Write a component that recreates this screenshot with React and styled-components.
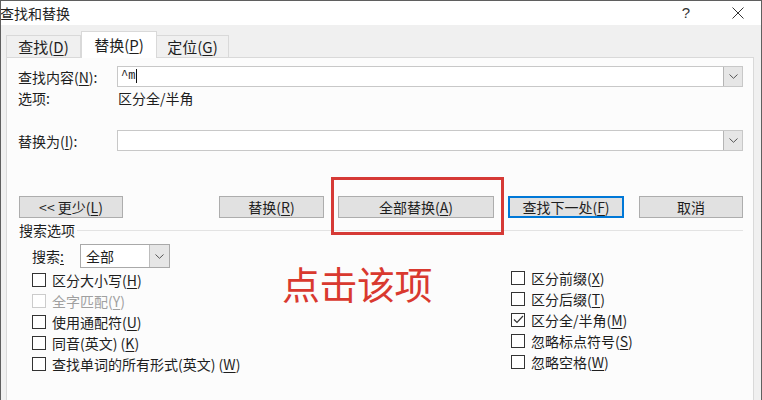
import styled, { createGlobalStyle } from "styled-components";

const GlobalStyle = createGlobalStyle`
    html, body {
        margin: 0;
        padding: 0;
        background: #ffffff;
    }
    body {
        font-family: "Noto Sans CJK SC", "Noto Sans", sans-serif;
        font-size: 14px;
        color: #1e1e1e;
    }
`;

const Window = styled.div`
    position: relative;
    width: 762px;
    height: 400px;
    box-sizing: border-box;
    border: 1px solid #5f5f5f;
    border-bottom: none;
    background: #f0f0f0;
    display: flex;
    flex-direction: column;
    overflow: hidden;
`;

const TitleBar = styled.div`
    height: 24px;
    background: #ffffff;
    display: flex;
    align-items: center;
    line-height: 16px;
`;

const TitleText = styled.span`
    margin-left: -1px;
`;

const TitleButtons = styled.div`
    margin-left: auto;
    display: flex;
    align-items: center;
    height: 100%;
`;

const HelpButton = styled.span`
    width: 12px;
    margin-right: 40px;
    font-family: "Liberation Sans", sans-serif;
    font-size: 15px;
    color: #333;
    text-align: center;
`;

const CloseButton = styled.span`
    display: flex;
    width: 12px;
    margin-right: 17px;
`;

const TabStrip = styled.div`
    height: 32px;
    display: flex;
    align-items: flex-end;
    padding-left: 5px;
`;

const Tab = styled.div`
    position: relative;
    z-index: ${(p) => (p.$active ? 2 : 1)};
    box-sizing: border-box;
    width: ${(p) => p.$width}px;
    height: ${(p) => (p.$active ? 27 : 23)}px;
    margin-bottom: -1px;
    padding-top: ${(p) => (p.$active ? 4 : 2)}px;
    border: 1px solid #d9d9d9;
    border-bottom: ${(p) => (p.$active ? "none" : "1px solid #d9d9d9")};
    border-left: ${(p) => (p.$first || p.$active ? "1px solid #d9d9d9" : "none")};
    background: ${(p) => (p.$active ? "#ffffff" : "#f0f0f0")};
    text-align: center;
    font-size: 15px;
    line-height: 18px;
`;

const Panel = styled.div`
    position: relative;
    flex: 1;
    margin: 0 7px 0 5px;
    border: 1px solid #d9d9d9;
    border-bottom: none;
    background: #fcfcfc;
    display: flex;
    flex-direction: column;
`;

const Key = styled.span`
    text-decoration: underline;
    text-underline-offset: 2px;
`;

const FieldRow = styled.div`
    display: flex;
    align-items: center;
    height: 21px;
    margin-top: ${(p) => p.$top}px;
    padding: 0 10px 0 11px;
`;

const FieldLabel = styled.span`
    width: 99px;
    flex-shrink: 0;
    line-height: 16px;
`;

const ComboBox = styled.div`
    flex: 1;
    height: 21px;
    box-sizing: border-box;
    border: 1px solid #c8c8c8;
    background: #ffffff;
    display: flex;
    align-items: center;
`;

const ComboText = styled.span`
    flex: 1;
    padding-left: 3px;
    font-family: "Liberation Mono", monospace;
    font-size: 12px;
    line-height: 19px;
`;

const Caret = styled.span`
    display: inline-block;
    width: 1px;
    height: 14px;
    margin-left: 1px;
    background: #111;
    vertical-align: middle;
`;

const DropButton = styled.div`
    width: 19px;
    height: 19px;
    box-sizing: border-box;
    border-left: 1px solid #b5b5b5;
    background: #e6e6e6;
    display: flex;
    align-items: center;
    justify-content: center;
`;

const InfoRow = styled.div`
    display: flex;
    height: 16px;
    margin-top: 3px;
    padding-left: 11px;
    line-height: 16px;
`;

const InfoValue = styled.span`
    margin-left: 1px;
`;

const ButtonRow = styled.div`
    display: flex;
    gap: 14px;
    margin-top: 45px;
    padding: 0 10px 0 12px;
`;

const Button = styled.button`
    width: ${(p) => p.$width}px;
    height: 22px;
    box-sizing: border-box;
    margin-right: ${(p) => (p.$pushRight ? "auto" : "0")};
    margin-left: ${(p) => p.$extraLeft || 0}px;
    border: ${(p) => (p.$default ? "2px solid #0078d7" : "1px solid #adadad")};
    background: #e1e1e1;
    font-family: inherit;
    font-size: 14px;
    color: #1e1e1e;
    line-height: 16px;
    padding: 0;
`;

const SectionHeading = styled.div`
    display: flex;
    align-items: center;
    gap: 2px;
    height: 16px;
    margin-top: 4px;
    padding: 0 10px 0 12px;
    line-height: 16px;
`;

const HeadingRule = styled.div`
    flex: 1;
    height: 1px;
    background: #e3e3e3;
`;

const SearchRow = styled.div`
    display: flex;
    align-items: center;
    height: 24px;
    margin-top: 6px;
    padding-left: 25px;
`;

const SearchLabel = styled.span`
    width: 48px;
`;

const Select = styled.div`
    width: 90px;
    height: 24px;
    box-sizing: border-box;
    border: 1px solid #a9a9a9;
    background: #ffffff;
    display: flex;
    align-items: center;
`;

const SelectText = styled.span`
    flex: 1;
    padding-left: 5px;
`;

const SelectDrop = styled.div`
    width: 19px;
    height: 22px;
    border-left: 1px solid #bdbdbd;
    background: #e6e6e6;
    display: flex;
    align-items: center;
    justify-content: center;
`;

const OptionColumns = styled.div`
    display: flex;
    margin-top: 2px;
    padding-left: 25px;
`;

const OptionColumn = styled.div`
    width: ${(p) => p.$width}px;
    display: flex;
    flex-direction: column;
    margin-top: ${(p) => p.$shift || 0}px;
`;

const CheckRow = styled.label`
    display: flex;
    align-items: center;
    gap: 6px;
    height: 20.8px;
    line-height: 16px;
    color: ${(p) => (p.$disabled ? "#a0a0a0" : "#1e1e1e")};
`;

const Box = styled.span`
    width: 14px;
    height: 14px;
    box-sizing: border-box;
    border: 1px solid ${(p) => (p.$disabled ? "#cccccc" : "#333333")};
    background: #ffffff;
    display: flex;
    align-items: center;
    justify-content: center;
    flex-shrink: 0;
`;

const Annotation = styled.div`
    position: absolute;
    left: 275px;
    top: 206px;
    font-size: 38px;
    line-height: 38px;
    color: #d9392f;
    letter-spacing: -0.5px;
`;

const Highlight = styled.div`
    position: absolute;
    left: 324px;
    top: 119px;
    width: 173px;
    height: 58px;
    box-sizing: border-box;
    border: 3px solid #d63a36;
`;

function Chevron() {
    return (
        <svg width="9" height="5" viewBox="0 0 9 5">
            <path d="M0.5 0.5 L4.5 4.3 L8.5 0.5" fill="none" stroke="#555" strokeWidth="1" />
        </svg>
    );
}

function Tick() {
    return (
        <svg width="11" height="9" viewBox="0 0 11 9">
            <path d="M1 4.5 L4 7.5 L10 1" fill="none" stroke="#333" strokeWidth="1.2" />
        </svg>
    );
}

function Accel({ text, k, tail = "" }) {
    return (
        <>
            {text}(<Key>{k}</Key>){tail}
        </>
    );
}

function Check({ label, k, checked, disabled }) {
    return (
        <CheckRow $disabled={disabled}>
            <Box $disabled={disabled}>{checked && <Tick />}</Box>
            <span>
                <Accel text={label} k={k} />
            </span>
        </CheckRow>
    );
}

const leftOptions = [
    { label: "区分大小写", k: "H" },
    { label: "全字匹配", k: "Y", disabled: true },
    { label: "使用通配符", k: "U" },
    { label: "同音(英文) ", k: "K" },
    { label: "查找单词的所有形式(英文) ", k: "W" },
];

const rightOptions = [
    { label: "区分前缀", k: "X" },
    { label: "区分后缀", k: "T" },
    { label: "区分全/半角", k: "M", checked: true },
    { label: "忽略标点符号", k: "S" },
    { label: "忽略空格", k: "W" },
];

function App() {
    return (
        <>
            <GlobalStyle />
            <Window>
                <TitleBar>
                    <TitleText>查找和替换</TitleText>
                    <TitleButtons>
                        <HelpButton>?</HelpButton>
                        <CloseButton>
                            <svg width="12" height="12" viewBox="0 0 12 12">
                                <path d="M0.5 0.5 L11.5 11.5 M11.5 0.5 L0.5 11.5" stroke="#333" strokeWidth="1" />
                            </svg>
                        </CloseButton>
                    </TitleButtons>
                </TitleBar>

                <TabStrip>
                    <Tab $width={75} $first>
                        <Accel text="查找" k="D" />
                    </Tab>
                    <Tab $width={76} $active>
                        <Accel text="替换" k="P" />
                    </Tab>
                    <Tab $width={72}>
                        <Accel text="定位" k="G" />
                    </Tab>
                </TabStrip>

                <Panel>
                    <FieldRow $top={8}>
                        <FieldLabel>
                            <Accel text="查找内容" k="N" tail=":" />
                        </FieldLabel>
                        <ComboBox>
                            <ComboText>
                                ^m
                                <Caret />
                            </ComboText>
                            <DropButton>
                                <Chevron />
                            </DropButton>
                        </ComboBox>
                    </FieldRow>
                    <InfoRow>
                        <FieldLabel>选项:</FieldLabel>
                        <InfoValue>区分全/半角</InfoValue>
                    </InfoRow>
                    <FieldRow $top={24}>
                        <FieldLabel>
                            <Accel text="替换为" k="I" tail=":" />
                        </FieldLabel>
                        <ComboBox>
                            <ComboText />
                            <DropButton>
                                <Chevron />
                            </DropButton>
                        </ComboBox>
                    </FieldRow>

                    <ButtonRow>
                        <Button $width={104} $pushRight>
                            {"<<  "}
                            <Accel text="更少" k="L" />
                        </Button>
                        <Button $width={105}>
                            <Accel text="替换" k="R" />
                        </Button>
                        <Button $width={156}>
                            <Accel text="全部替换" k="A" />
                        </Button>
                        <Button $width={116} $default>
                            <Accel text="查找下一处" k="F" />
                        </Button>
                        <Button $width={104} $extraLeft={1}>
                            取消
                        </Button>
                    </ButtonRow>

                    <SectionHeading>
                        搜索选项
                        <HeadingRule />
                    </SectionHeading>

                    <SearchRow>
                        <SearchLabel>
                            搜索<Key>:</Key>
                        </SearchLabel>
                        <Select>
                            <SelectText>全部</SelectText>
                            <SelectDrop>
                                <Chevron />
                            </SelectDrop>
                        </Select>
                    </SearchRow>

                    <OptionColumns>
                        <OptionColumn $width={479}>
                            {leftOptions.map((o) => (
                                <Check key={o.label} label={o.label} k={o.k} disabled={o.disabled} />
                            ))}
                        </OptionColumn>
                        <OptionColumn $width={230} $shift={-2}>
                            {rightOptions.map((o) => (
                                <Check key={o.label} label={o.label} k={o.k} checked={o.checked} />
                            ))}
                        </OptionColumn>
                    </OptionColumns>

                    <Highlight />
                    <Annotation>点击该项</Annotation>
                </Panel>
            </Window>
        </>
    );
}

export default App;
